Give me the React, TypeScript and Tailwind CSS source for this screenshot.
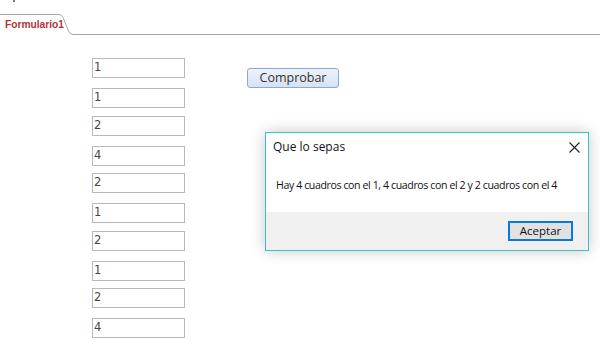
const values = [
  { v: "1", mt: "mt-[23px]" },
  { v: "1", mt: "mt-[10px]" },
  { v: "2", mt: "mt-[8px]" },
  { v: "4", mt: "mt-[10px]" },
  { v: "2", mt: "mt-[7px]" },
  { v: "1", mt: "mt-[10px]" },
  { v: "2", mt: "mt-[8px]" },
  { v: "1", mt: "mt-[10px]" },
  { v: "2", mt: "mt-[7px]" },
  { v: "4", mt: "mt-[10px]" },
];

export default function App() {
  return (
    <div className="relative w-[600px] h-[357px] bg-white overflow-hidden font-['Open_Sans',sans-serif]">
      {/* tiny mark at top */}
      <div className="absolute left-[13px] top-0 w-[2px] h-[2px] bg-[#777]" />

      {/* header tab */}
      <div className="flex h-[35px]">
        <div className="mt-[14px] w-[58px] border-t border-[#a8a8a8] flex items-center pl-[5px]">
          <span className="text-[10.2px] font-bold text-[#b0343a] font-['Liberation_Sans',sans-serif] whitespace-nowrap leading-none mt-[1px]">
            Formulario1
          </span>
        </div>
        <svg width="15" height="35" viewBox="0 0 15 35" className="shrink-0">
          <path
            d="M0 14.5 H1 Q3.5 14.5 5 17.5 L10.5 31 Q12 34.5 15 34.5"
            fill="none"
            stroke="#a8a8a8"
            strokeWidth="1"
          />
        </svg>
        <div className="flex-1 border-b border-[#a8a8a8]" />
      </div>

      {/* form body */}
      <div className="flex pl-[92px]">
        <div className="flex flex-col w-[93px]">
          {values.map((item, i) => (
            <div
              key={i}
              className={`${item.mt} h-[20px] border border-[#b9b9b9] bg-white flex items-center pl-[1px] text-[11.5px] text-[#4b4540] font-['DejaVu_Sans',sans-serif]`}
            >
              {item.v}
            </div>
          ))}
        </div>

        <div className="ml-[62px] mt-[33px]">
          <button className="w-[92px] h-[20px] rounded-[3px] border border-[#8fa8cf] bg-gradient-to-b from-[#eef3fb] to-[#d5e1f4] text-[12.5px] text-[#333] leading-none flex items-center justify-center">
            Comprobar
          </button>
        </div>
      </div>

      {/* message box */}
      <div className="absolute left-[265px] top-[132px] w-[324px] h-[119px] border border-[#3cc0c8] bg-white shadow-[0_0_14px_rgba(0,0,0,0.22)] flex flex-col">
        <div className="flex items-center justify-between h-[27px] pl-[7px] pr-[8px] pt-[1px]">
          <span className="text-[12px] text-[#111]">Que lo sepas</span>
          <svg width="11" height="11" viewBox="0 0 11 11">
            <path d="M0.5 0.5 L10.5 10.5 M10.5 0.5 L0.5 10.5" stroke="#222" strokeWidth="1.1" />
          </svg>
        </div>
        <div className="h-[52px] flex items-end pb-[18px] pl-[10px]">
          <span className="text-[10.6px] text-[#111] whitespace-nowrap tracking-[-0.4px]">
            Hay 4 cuadros con el 1, 4 cuadros con el 2 y 2 cuadros con el 4
          </span>
        </div>
        <div className="flex-1 bg-[#f0f0f0] flex justify-end items-start pt-[9px] pr-[15px]">
          <button className="w-[65px] h-[20px] border-2 border-[#0a7ad6] bg-[#e1e1e1] text-[11.5px] text-[#111] leading-none flex items-center justify-center">
            Aceptar
          </button>
        </div>
      </div>
    </div>
  );
}
